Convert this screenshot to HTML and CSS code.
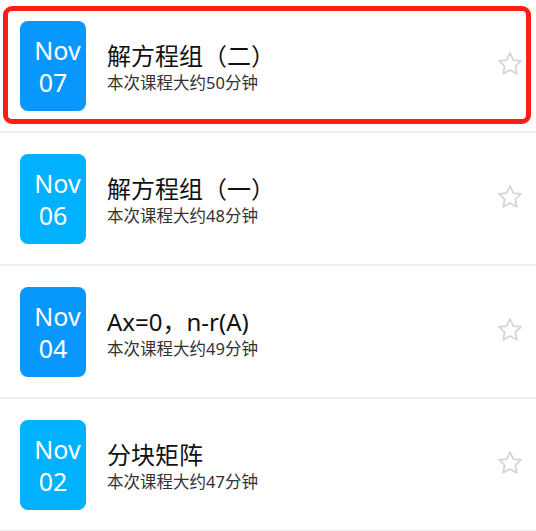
FILE: index.html
```html
<!DOCTYPE html>
<html lang="zh-CN">
<head>
  <meta charset="UTF-8" />
  <title>课程列表</title>
  <link rel="stylesheet" href="styles.css">
</head>
<body>
  <ul class="course-list">
    <li class="course active">
      <div class="date dark">
        <span class="month">Nov</span>
        <span>07</span>
      </div>
      <div class="info">
        <div class="title">解方程组（二）</div>
        <div class="desc">本次课程大约50分钟</div>
      </div>
      <svg class="star" viewBox="0 0 24 24"><path d="M12 2.6l2.9 6 6.5.8-4.8 4.5 1.2 6.5L12 17.2l-5.8 3.2 1.2-6.5-4.8-4.5 6.5-.8z"/></svg>
    </li>
    <li class="course">
      <div class="date light">
        <span class="month">Nov</span>
        <span>06</span>
      </div>
      <div class="info">
        <div class="title">解方程组（一）</div>
        <div class="desc">本次课程大约48分钟</div>
      </div>
      <svg class="star" viewBox="0 0 24 24"><path d="M12 2.6l2.9 6 6.5.8-4.8 4.5 1.2 6.5L12 17.2l-5.8 3.2 1.2-6.5-4.8-4.5 6.5-.8z"/></svg>
    </li>
    <li class="course">
      <div class="date dark">
        <span class="month">Nov</span>
        <span>04</span>
      </div>
      <div class="info">
        <div class="title">Ax=0，n-r(A)</div>
        <div class="desc">本次课程大约49分钟</div>
      </div>
      <svg class="star" viewBox="0 0 24 24"><path d="M12 2.6l2.9 6 6.5.8-4.8 4.5 1.2 6.5L12 17.2l-5.8 3.2 1.2-6.5-4.8-4.5 6.5-.8z"/></svg>
    </li>
    <li class="course">
      <div class="date light">
        <span class="month">Nov</span>
        <span>02</span>
      </div>
      <div class="info">
        <div class="title">分块矩阵</div>
        <div class="desc">本次课程大约47分钟</div>
      </div>
      <svg class="star" viewBox="0 0 24 24"><path d="M12 2.6l2.9 6 6.5.8-4.8 4.5 1.2 6.5L12 17.2l-5.8 3.2 1.2-6.5-4.8-4.5 6.5-.8z"/></svg>
    </li>
  </ul>
</body>
</html>
```
FILE: styles.css
```css
body {
  margin: 0;
  background: #fff;
  font-family: "Noto Sans", "Noto Sans CJK SC", sans-serif;
}
.course-list {
  list-style: none;
  margin: 0;
  padding: 0;
}
.course {
  position: relative;
  display: flex;
  align-items: center;
  height: 131px;
  padding: 0 12px 0 20px;
  border-bottom: 2px solid #f0f0f0;
}
.course.active::after {
  content: "";
  position: absolute;
  top: 6px;
  left: 3px;
  right: 5px;
  bottom: 7px;
  border: 5px solid #fa1e14;
  border-radius: 9px;
  pointer-events: none;
}
.date {
  width: 66px;
  height: 90px;
  border-radius: 8px;
  display: flex;
  flex-direction: column;
  align-items: center;
  justify-content: center;
  color: #fff;
  font-size: 25px;
  line-height: 32px;
}
.date .month {
  padding-left: 9px;
}
.date.dark {
  background: #0898fd;
}
.date.light {
  background: #00b1fe;
}
.info {
  flex: 1;
  margin-left: 21px;
  padding-top: 5px;
}
.title {
  font-size: 24px;
  line-height: 30px;
  color: #111;
}
.desc {
  font-size: 16.5px;
  line-height: 24px;
  color: #333;
}
.star {
  width: 28px;
  height: 28px;
  margin-top: -4px;
  fill: none;
  stroke: #d4d4d4;
  stroke-width: 1.5;
  stroke-linejoin: round;
}
```
